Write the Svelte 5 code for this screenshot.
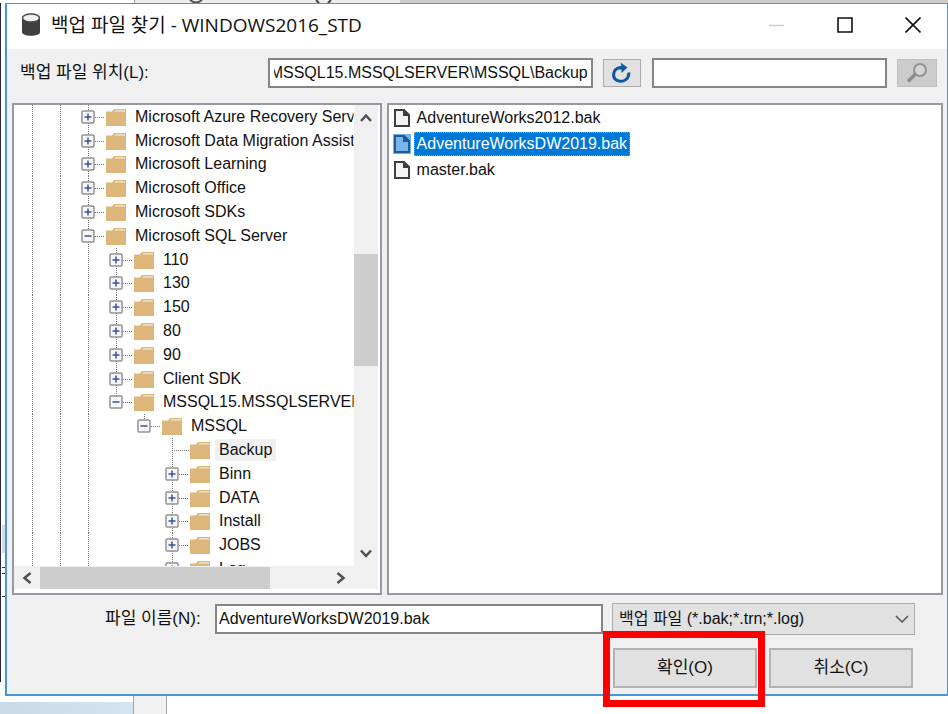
<script>
  import { onMount } from 'svelte';

  const tree = [
    { name: 'Microsoft Azure Recovery Services', depth: 2, state: 'closed' },
    { name: 'Microsoft Data Migration Assistant', depth: 2, state: 'closed' },
    { name: 'Microsoft Learning', depth: 2, state: 'closed' },
    { name: 'Microsoft Office', depth: 2, state: 'closed' },
    { name: 'Microsoft SDKs', depth: 2, state: 'closed' },
    { name: 'Microsoft SQL Server', depth: 2, state: 'open' },
    { name: '110', depth: 3, state: 'closed' },
    { name: '130', depth: 3, state: 'closed' },
    { name: '150', depth: 3, state: 'closed' },
    { name: '80', depth: 3, state: 'closed' },
    { name: '90', depth: 3, state: 'closed' },
    { name: 'Client SDK', depth: 3, state: 'closed' },
    { name: 'MSSQL15.MSSQLSERVER', depth: 3, state: 'open', last: true },
    { name: 'MSSQL', depth: 4, state: 'open', last: true },
    { name: 'Backup', depth: 5, state: 'leaf' },
    { name: 'Binn', depth: 5, state: 'closed' },
    { name: 'DATA', depth: 5, state: 'closed' },
    { name: 'Install', depth: 5, state: 'closed' },
    { name: 'JOBS', depth: 5, state: 'closed' },
    { name: 'Log', depth: 5, state: 'closed' }
  ];
  const files = ['AdventureWorks2012.bak', 'AdventureWorksDW2019.bak', 'master.bak'];

  let folder = $state('Backup');
  let file = $state('AdventureWorksDW2019.bak');
  let path = $state('MSSQL15.MSSQLSERVER\\MSSQL\\Backup');
  let query = $state('');
  let pathBox;

  onMount(() => {
    pathBox.scrollLeft = pathBox.scrollWidth;
  });
</script>

<div class="desktop">
  <svg class="behind-top" width="400" height="4" viewBox="0 0 400 4" aria-hidden="true">
    <path d="M134 0H400V4H134Z" fill="#ececec" />
    <path d="M134.500 0V4" stroke="#9a9a9a" />
    <path d="M190 0Q196 5 202 0" fill="none" stroke="#555" stroke-width="2" />
    <path d="M316 0L319 3M331 0L328 3" stroke="#444" stroke-width="2" />
  </svg>
  <div class="behind-left" aria-hidden="true"><i></i><b></b><b></b></div>

  <section class="dialog" aria-label="백업 파일 찾기">
    <header>
      <svg class="db" width="20" height="24" viewBox="0 0 20 24" aria-hidden="true">
        <path d="M1 5V19C1 24 19 24 19 19V5Z" fill="#3f3f3f" />
        <ellipse cx="10" cy="5" rx="8.500" ry="4" fill="#f1f1f1" stroke="#4a4a4a" stroke-width="1.500" />
      </svg>
      <h1>백업 파일 찾기 - WINDOWS2016_STD</h1>
      <div class="window-buttons">
        <button aria-label="최소화" disabled>
          <svg width="16" height="16" viewBox="0 0 16 16"><path d="M0 8.500H15" stroke="#ccc" stroke-width="1.500" /></svg>
        </button>
        <button aria-label="최대화">
          <svg width="16" height="16" viewBox="0 0 16 16"><path d="M1 1H15V15H1Z" fill="none" stroke="#111" stroke-width="1.600" /></svg>
        </button>
        <button aria-label="닫기">
          <svg width="16" height="16" viewBox="0 0 16 16"><path d="M.5 .5L15.500 15.500M15.500 .5L.5 15.500" stroke="#111" stroke-width="1.600" /></svg>
        </button>
      </div>
    </header>

    <div class="location">
      <label for="path">백업 파일 위치(L):</label>
      <input id="path" class="path" bind:this={pathBox} bind:value={path} />
      <button class="tool" aria-label="새로 고침">
        <svg width="20" height="22" viewBox="0 0 20 22">
          <path d="M8.500 5.600C.5 6.500-.5 16 5.500 18.500C11 21 17.500 17 16.700 10.500" fill="none" stroke="#0c56a4" stroke-width="3" />
          <path d="M8.500 .5L15.500 5.500L9.500 11V7.500H7.500V4H9.500Z" fill="#0c56a4" />
        </svg>
      </button>
      <input class="query" aria-label="검색" bind:value={query} />
      <button class="tool find" aria-label="찾기" disabled>
        <svg width="22" height="22" viewBox="0 0 22 22">
          <circle cx="14" cy="8" r="6" fill="#d6d6d6" stroke="#929292" stroke-width="2" />
          <path d="M9.500 12L2 19.500" stroke="#8b8b8b" stroke-width="3.500" />
        </svg>
      </button>
    </div>

    <div class="panes">
      <div class="pane folders">
        <ul class="tree" role="tree" aria-label="폴더">
          {#each tree as node}
            <li role="treeitem" aria-selected={node.name === folder}>
              {#each Array(node.depth) as _, level}
                <span class="guide" class:line={level < 3}></span>
              {/each}
              <span class="guide line joint" class:last={node.last} class:leaf={node.state === 'leaf'}>
                {#if node.state !== 'leaf'}
                  <button class="toggle" aria-label={node.name}>
                    <svg width="14" height="14" viewBox="0 0 14 14">
                      <rect x="1" y="1" width="12" height="12" rx="1" fill="#f7f7f7" stroke="#929292" stroke-width="1.500" />
                      <path d={node.state === 'open' ? 'M3.500 7H10.500' : 'M3.500 7H10.500M7 3.500V10.500'} stroke="#3953a0" stroke-width="1.500" />
                    </svg>
                  </button>
                {/if}
              </span>
              <svg class="folder" width="20" height="18" viewBox="0 0 20 18" aria-hidden="true">
                <path d="M0 3.500H6L8 1H20V18H0Z" fill="#dcb67a" />
                <path d="M8.500 3.500L9.500 2.300H19V3.500Z" fill="#f5ead6" />
              </svg>
              <button class="name" class:current={node.name === folder} onclick={() => (folder = node.name)}>{node.name}</button>
            </li>
          {/each}
        </ul>
        <div class="vbar" aria-hidden="true">
          <svg width="24" height="24" viewBox="0 0 24 24"><path d="M7 16L12 10.500L17 16" fill="none" stroke="#505050" stroke-width="2.500" /></svg>
          <span></span>
          <svg width="24" height="24" viewBox="0 0 24 24"><path d="M7 8.500L12 14L17 8.500" fill="none" stroke="#505050" stroke-width="2.500" /></svg>
        </div>
        <div class="hbar" aria-hidden="true">
          <svg width="26" height="22" viewBox="0 0 26 22"><path d="M16.500 6L10.500 11L16.500 16" fill="none" stroke="#505050" stroke-width="2.500" /></svg>
          <span></span>
          <svg width="26" height="22" viewBox="0 0 26 22"><path d="M9.500 6L15.500 11L9.500 16" fill="none" stroke="#505050" stroke-width="2.500" /></svg>
        </div>
      </div>

      <ul class="pane files" aria-label="파일">
        {#each files as name}
          <li class:chosen={name === file}>
            <svg width="18" height="20" viewBox="0 0 18 20" aria-hidden="true">
              {#if name === file}<path d="M0 0H18V20H0Z" fill="#70b1e8" />{/if}
              <path class="sheet" d="M2 2H11L16 7V18H2Z" />
              <path class="fold" d="M10 1.500L16.500 8H10Z" />
            </svg>
            <button onclick={() => (file = name)}>{name}</button>
          </li>
        {/each}
      </ul>
    </div>

    <div class="filename">
      <label for="file">파일 이름(N):</label>
      <input id="file" bind:value={file} />
      <div class="type">
        <select aria-label="파일 형식">
          <option>백업 파일 (*.bak;*.trn;*.log)</option>
        </select>
        <svg width="14" height="8" viewBox="0 0 14 8" aria-hidden="true"><path d="M1 1L7 7L13 1" fill="none" stroke="#555" stroke-width="1.500" /></svg>
      </div>
    </div>

    <footer>
      <div class="marked"><button>확인(O)</button></div>
      <button>취소(C)</button>
    </footer>
  </section>

  <div class="behind-bottom" aria-hidden="true"><i></i><b></b></div>
</div>

<style>
  :global(body) { margin: 0; background: #fff; }
  .desktop {
    position: relative;
    box-sizing: border-box;
    min-height: 100vh;
    padding: 3px 0 0 5px;
    display: flex;
    flex-direction: column;
    overflow: hidden;
    background: linear-gradient(90deg, #fff 386px, #ccc 386px) top / 100% 3px no-repeat, #fff;
    font: 16px/20px 'Liberation Sans', 'Noto Sans CJK KR', sans-serif;
    color: #111;
  }
  .behind-top { position: absolute; top: 0; left: 0; }
  .behind-left {
    position: absolute;
    left: 0;
    top: 3px;
    bottom: 32px;
    width: 5px;
    border-left: 1px solid #26263c;
    box-sizing: border-box;
  }
  .behind-left i { position: absolute; left: 1px; right: 0; top: 522px; height: 28px; background: #d9dce8; }
  .behind-left b { position: absolute; left: 1px; width: 4px; top: 564px; height: 7px; border: solid #333; border-width: 1px 1px 1px 0; box-sizing: border-box; }
  .behind-left b + b { top: 593px; height: 1px; border-width: 1px 0 0; }
  .behind-bottom { display: flex; flex: 1; margin-left: -5px; min-height: 18px; }
  .behind-bottom i { width: 133px; margin-top: 6px; background: linear-gradient(90deg, #c9d9e8, #d5e4f2); }
  .behind-bottom b { width: 32px; border: solid #a3a3a8; border-width: 0 1px; background: #f0f0f0; }

  .dialog { position: relative; border: solid #4597dc; border-width: 1px 1px 2px 2px; background: #f0f0f0; }
  button, input, select { font: inherit; color: inherit; border-radius: 0; margin: 0; box-sizing: border-box; }
  button { padding: 0; border: 0; background: none; }
  input { min-width: 0; height: 30px; padding: 0 4px; border: 2px solid #858585; background: #fff; outline: 0; }
  ul { list-style: none; margin: 0; padding: 0; }
  label, footer { font-size: 17px; }

  header { display: flex; align-items: center; box-sizing: border-box; height: 45px; padding: 0 0 3px 14px; background: #fff; }
  h1 { flex: 1; margin: 0 0 0 10px; font: 19px/24px 'Open Sans', 'Noto Sans CJK KR', sans-serif; }
  .window-buttons { display: flex; }
  .window-buttons button { display: grid; place-items: center; width: 68px; height: 42px; }

  .location { display: flex; align-items: center; height: 48px; padding: 0 10px 6px 13px; }
  .location label { flex: 248 1 0; white-space: nowrap; }
  .path { flex: 314 1 0; }
  .query { flex: 223 1 0; margin-left: 11px; }
  .tool { display: grid; place-items: center; flex: none; width: 38px; height: 28px; margin-left: 10px; border: 1px solid #adadad; background: #e1e1e1; }
  .find { width: 40px; border-color: #bfbfbf; background: #ccc; }

  .panes { display: flex; gap: 5px; padding: 0 4px 0 5px; height: 492px; }
  .pane { box-sizing: border-box; min-width: 0; border: 2px solid #9699a2; background: #fff; }
  .folders { flex: 364 1 0; display: grid; grid-template: 461px 23px / minmax(0, 1fr) 24px; padding: 0 2px 2px 0; }
  .files { flex: 553 1 0; }

  .tree { overflow: hidden; display: grid; grid-auto-rows: 1fr; height: 476px; clip-path: inset(0 0 15px); padding-left: 4px; }
  .tree li { display: flex; align-items: center; min-width: 0; white-space: nowrap; }
  .guide { position: relative; flex: none; align-self: stretch; display: grid; place-items: center; width: 28px; }
  .line { background: repeating-linear-gradient(#777 0 1px, #fff 1px 2px) 14px 0 / 1px 100% no-repeat; }
  .joint.last { background-size: 1px 50%; }
  .joint::after { content: ''; position: absolute; left: 21px; right: -3px; top: 50%; height: 1px; background: repeating-linear-gradient(90deg, #777 0 1px, #fff 1px 2px); }
  .joint.leaf::after { left: 14px; }
  .toggle { display: grid; width: 14px; height: 14px; }
  .folder { flex: none; margin: 0 5px 0 4px; }
  .name { padding: 1px 4px; }
  .current { background: #f0f0f0; }

  .vbar { display: flex; flex-direction: column; background: #f0f0f0; }
  .vbar span { height: 112px; margin: 125px 0 auto; background: #cdcdcd; }
  .hbar { grid-column: 1 / 3; display: flex; align-items: center; padding-right: 24px; background: #f0f0f0; }
  .hbar span { width: 230px; height: 22px; margin-right: auto; background: #cdcdcd; }

  .files li { display: flex; align-items: center; height: 26px; padding-left: 4px; }
  .files svg { flex: none; margin-right: 3px; }
  .files button { height: 24px; padding: 0 3px; }
  .sheet { fill: #f3f3f5; stroke: #3e3e42; stroke-width: 2; }
  .fold { fill: #3e3e42; }
  .chosen .sheet { fill: #78b5ea; stroke: #1d5c95; }
  .chosen .fold { fill: #1d5c95; }
  .chosen button { background: #0078d7; color: #fff; outline: 1px dotted #e08a30; outline-offset: -1px; }

  .filename { display: flex; align-items: center; height: 32px; margin-top: 8px; padding: 0 32px 0 98px; }
  .filename label { flex: 110 1 0; white-space: nowrap; }
  .filename input { flex: 380 1 0; padding: 0 2px; }
  .type { flex: 303 1 0; position: relative; margin-left: 9px; }
  select { appearance: none; display: block; width: 100%; height: 32px; padding: 0 24px 0 6px; border: 1px solid #adadad; background: #e1e1e1; }
  .type svg { position: absolute; right: 6px; top: 12px; pointer-events: none; }

  footer { display: flex; justify-content: flex-end; gap: 12px; padding: 13px 34px 6px; }
  footer button { width: 144px; height: 40px; border: 2px solid #b3b3b3; background: #e1e1e1; }
  .marked { position: relative; }
  .marked::after { content: ''; position: absolute; inset: -17px -8px -19px -10px; border: 7px solid #f00; pointer-events: none; }
</style>
